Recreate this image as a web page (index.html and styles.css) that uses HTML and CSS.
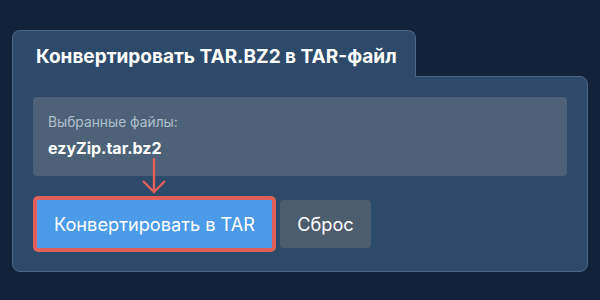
FILE: index.html
```html
<!DOCTYPE html>
<html lang="ru">
<head>
<meta charset="utf-8">
<link rel="stylesheet" href="styles.css">
</head>
<body>
<div class="wrap">
  <div class="tab"><h1 class="title">Конвертировать TAR.BZ2 в TAR-файл</h1></div>
  <div class="panel">
    <div class="files">
      <div class="label">Выбранные файлы:</div>
      <div class="name">ezyZip.tar.bz2</div>
    </div>
    <div class="actions">
      <button class="btn convert">Конвертировать в TAR</button>
      <button class="btn reset">Сброс</button>
      <svg class="arrow" width="28" height="38" viewBox="0 0 28 38"><path d="M14 1 V35 M3 24 L14 35 L25 24" fill="none" stroke="#e0605a" stroke-width="2.4"/></svg>
    </div>
  </div>
</div>
</body>
</html>
```
FILE: styles.css
```css
html, body { margin: 0; padding: 0; }
body {
  width: 600px; height: 300px; overflow: hidden;
  background: #10233a;
  font-family: Inter, "Noto Sans", sans-serif;
  color: #fff;
}
.wrap { padding: 30px 0 0 12px; width: 576px; }
.tab {
  width: 404px; box-sizing: border-box; height: 47px;
  background: #2d4a6b;
  border: 1px solid #4a6585; border-bottom: none;
  border-radius: 8px 8px 0 0;
  padding: 0 0 0 23px;
  display: flex; align-items: center;
  position: relative; z-index: 1;
  margin-bottom: -1px;
}
.title { margin: 0; font-size: 19px; font-weight: 700; letter-spacing: 0; padding-top: 4px; white-space: nowrap; }
.panel {
  background: #2d4a6b;
  border: 1px solid #4a6585;
  border-radius: 0 8px 8px 8px;
  padding: 20px 20px 19px 20px;
}
.files {
  background: #4d6279;
  border-radius: 4px;
  height: 79px; box-sizing: border-box;
  padding: 17px 15px 0 15px;
}
.label { font-size: 13.8px; color: #b3bfcc; line-height: 17px; }
.name { font-size: 16px; font-weight: 700; margin-top: 8px; line-height: 19px; }
.actions { display: flex; align-items: center; gap: 4px; margin-top: 20px; position: relative; }
.btn {
  font-family: Inter, "Noto Sans", sans-serif;
  font-size: 18.2px; color: #fff; border: none; cursor: pointer;
  border-radius: 4px; padding: 0; white-space: nowrap;
}
.convert {
  width: 243px; height: 56px;
  background: #4c9be8;
  border: 4px solid #e0605a;
  border-radius: 5px;
}
.reset { width: 91px; height: 48px; background: #4e5d6d; }
.arrow { position: absolute; left: 107px; top: -39px; }
```
